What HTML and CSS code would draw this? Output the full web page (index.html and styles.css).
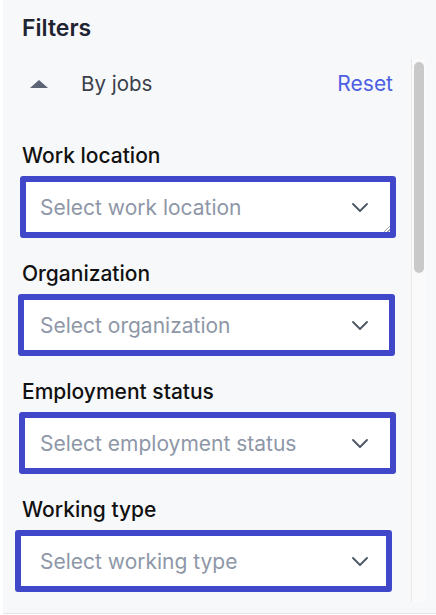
FILE: index.html
```html
<!DOCTYPE html>
<html>
<head>
    <title>Filters</title>
    <link rel="stylesheet" href="styles.css">
</head>
<body>
    <div class="panel">
        <div class="main">
            <h2 class="title">Filters</h2>

            <div class="group-row">
                <span class="caret"></span>
                <span class="group-name">By jobs</span>
                <a class="reset" href="#">Reset</a>
            </div>

            <div class="field">
                <label class="label">Work location</label>
                <div class="select select-a">
                    <span class="placeholder">Select work location</span>
                    <svg class="chevron" width="16" height="9" viewBox="0 0 16 9"><path d="M1 1l7 7 7-7" fill="none" stroke="#4b5563" stroke-width="1.8" stroke-linecap="round" stroke-linejoin="round"/></svg>
                </div>
            </div>

            <div class="field">
                <label class="label">Organization</label>
                <div class="select select-b">
                    <span class="placeholder">Select organization</span>
                    <svg class="chevron" width="16" height="9" viewBox="0 0 16 9"><path d="M1 1l7 7 7-7" fill="none" stroke="#4b5563" stroke-width="1.8" stroke-linecap="round" stroke-linejoin="round"/></svg>
                </div>
            </div>

            <div class="field">
                <label class="label">Employment status</label>
                <div class="select select-c">
                    <span class="placeholder">Select employment status</span>
                    <svg class="chevron" width="16" height="9" viewBox="0 0 16 9"><path d="M1 1l7 7 7-7" fill="none" stroke="#4b5563" stroke-width="1.8" stroke-linecap="round" stroke-linejoin="round"/></svg>
                </div>
            </div>

            <div class="field">
                <label class="label">Working type</label>
                <div class="select select-d">
                    <span class="placeholder">Select working type</span>
                    <svg class="chevron" width="16" height="9" viewBox="0 0 16 9"><path d="M1 1l7 7 7-7" fill="none" stroke="#4b5563" stroke-width="1.8" stroke-linecap="round" stroke-linejoin="round"/></svg>
                </div>
            </div>
        </div>

        <div class="scrollbar">
            <div class="thumb"></div>
        </div>
    </div>
</body>
</html>
```

FILE: styles.css
```css
body {
    margin: 0;
    background: #fff;
    font-family: Inter, "Noto Sans", sans-serif;
}

.panel {
    margin-left: 3px;
    height: 613px;
    background: #f7f8fa;
    border-bottom: 1px solid #e3e5e9;
    display: flex;
    overflow: hidden;
}

.main {
    width: 389px;
    padding-left: 19px;
    display: flex;
    flex-direction: column;
}

.title {
    margin: 14px 0 0;
    font-size: 23px;
    line-height: 28px;
    font-weight: 600;
    color: #1f2430;
}

.group-row {
    margin-top: 28px;
    height: 28px;
    display: flex;
    align-items: center;
}

.caret {
    width: 0;
    height: 0;
    margin-left: 8px;
    border-left: 9px solid transparent;
    border-right: 9px solid transparent;
    border-bottom: 8px solid #5b6474;
}

.group-name {
    margin-left: 33px;
    font-size: 20.5px;
    line-height: 28px;
    color: #3a3f4a;
    flex: 1;
}

.reset {
    font-size: 21px;
    line-height: 28px;
    color: #4c5fe3;
    text-decoration: none;
    margin-right: 18px;
}

.field {
    display: flex;
    flex-direction: column;
}

.group-row + .field {
    margin-top: 46px;
}

.field + .field {
    margin-top: 24px;
}

.label {
    font-size: 21px;
    line-height: 24px;
    font-weight: 500;
    color: #111;
    margin-bottom: 8px;
}

.select {
    position: relative;
    box-sizing: border-box;
    height: 62px;
    width: 376px;
    margin-left: -2px;
    padding: 0 22px 0 14px;
    background: #fff;
    border: 6px solid #4048c9;
    border-radius: 3px;
    display: flex;
    align-items: center;
    justify-content: space-between;
}

/* little resize grip on the first box */
.select-a::after {
    content: '';
    position: absolute;
    right: 0;
    bottom: 0;
    width: 6px;
    height: 6px;
    background: linear-gradient(135deg, transparent 45%, #9aa0a8 45%, #9aa0a8 58%, transparent 58%, transparent 75%, #9aa0a8 75%, #9aa0a8 88%, transparent 88%);
}

.select-b {
    width: 377px;
    margin-left: -4px;
    padding-left: 16px;
    padding-right: 21px;
}

.select-c {
    width: 377px;
    margin-left: -3px;
    padding-left: 15px;
    padding-right: 22px;
}

.select-d {
    width: 377px;
    margin-left: -7px;
    padding-left: 19px;
    padding-right: 18px;
}

.placeholder {
    font-size: 21px;
    color: #8e97a8;
}

.scrollbar {
    box-sizing: border-box;
    width: 15px;
    height: 543px;
    margin-top: 59px;
    padding: 3px 2px 0;
    background: #fafafa;
    border-left: 1px solid #e9e9ea;
}

.thumb {
    height: 211px;
    border-radius: 6px;
    background: #c9c9c9;
}
```
